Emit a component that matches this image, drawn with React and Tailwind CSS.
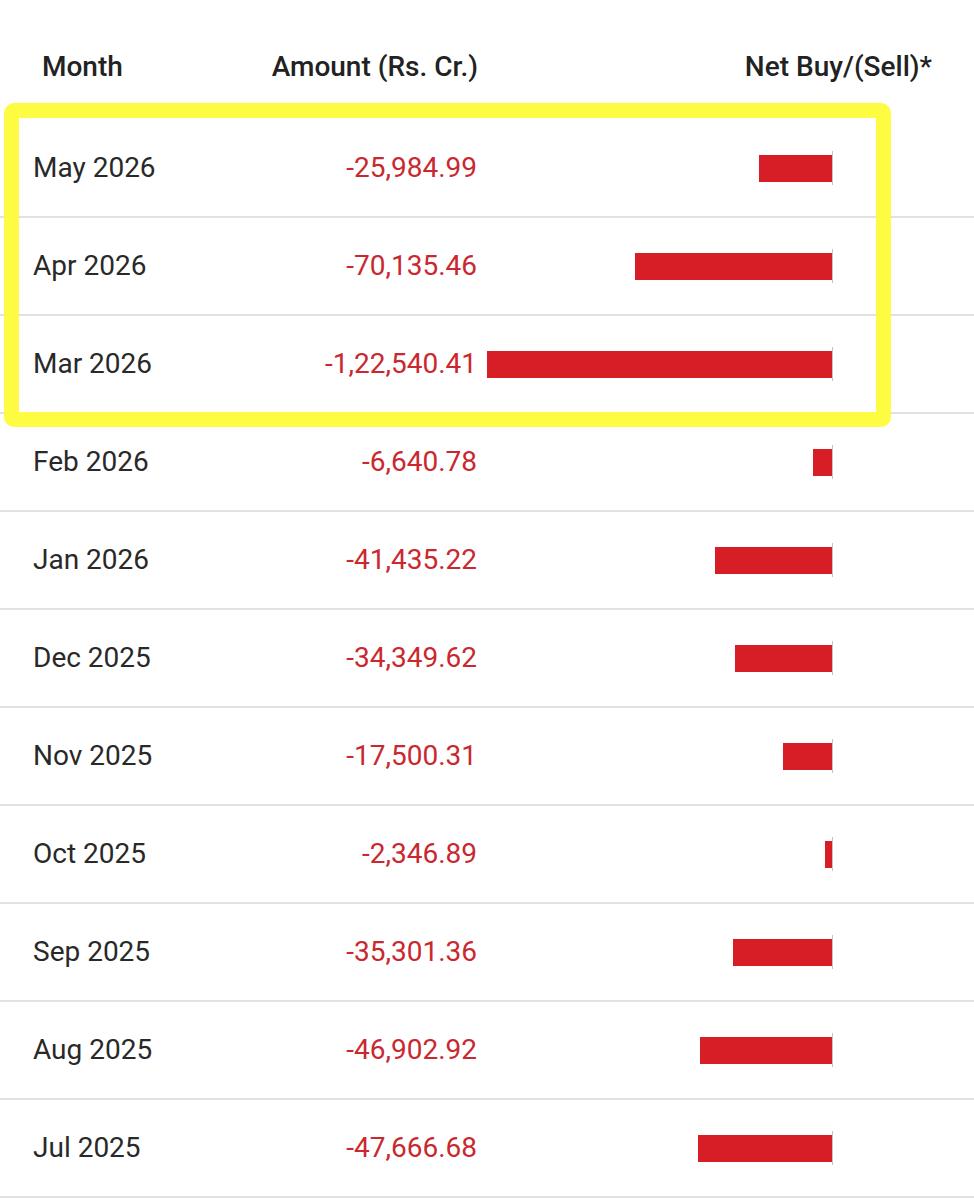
import React from 'react';

const rows = [
  { month: 'May 2026', amount: '-25,984.99', value: 25984.99 },
  { month: 'Apr 2026', amount: '-70,135.46', value: 70135.46 },
  { month: 'Mar 2026', amount: '-1,22,540.41', value: 122540.41 },
  { month: 'Feb 2026', amount: '-6,640.78', value: 6640.78 },
  { month: 'Jan 2026', amount: '-41,435.22', value: 41435.22 },
  { month: 'Dec 2025', amount: '-34,349.62', value: 34349.62 },
  { month: 'Nov 2025', amount: '-17,500.31', value: 17500.31 },
  { month: 'Oct 2025', amount: '-2,346.89', value: 2346.89 },
  { month: 'Sep 2025', amount: '-35,301.36', value: 35301.36 },
  { month: 'Aug 2025', amount: '-46,902.92', value: 46902.92 },
  { month: 'Jul 2025', amount: '-47,666.68', value: 47666.68 },
];

const maxValue = 122540.41;
const barMax = 345;

export default function App() {
  return (
    <div className="relative w-[974px] h-[1200px] bg-white overflow-hidden font-['Roboto',sans-serif] text-[28px] text-[#292929]">
      {/* Header */}
      <div className="flex items-center h-[120px] pt-[14px]">
        <div className="w-[250px] pl-[42px] font-medium text-[#222]">Month</div>
        <div className="w-[228px] text-right font-medium text-[#222] whitespace-nowrap">Amount (Rs. Cr.)</div>
        <div className="w-[454px] text-right font-medium text-[#222] whitespace-nowrap">Net Buy/(Sell)*</div>
      </div>

      {/* Rows */}
      {rows.map((r) => (
        <div key={r.month} className="flex items-center h-[98px] border-b-2 border-[#e2e2e2]">
          <div className="w-[250px] pl-[33px] whitespace-nowrap">{r.month}</div>
          <div className="w-[227px] text-right text-[#c9282f] whitespace-nowrap">{r.amount}</div>
          <div className="ml-[10px] w-[345px] flex justify-end items-center">
            <div className="h-[27px] bg-[#d71e26]" style={{ width: Math.round((r.value / maxValue) * barMax) }} />
          </div>
          <div className="w-px h-[34px] bg-[#c4c4c4]" />
        </div>
      ))}

      {/* Highlight box */}
      <div className="absolute left-[4px] top-[103px] w-[887px] h-[324px] border-[15px] border-[#fdfb42] rounded-[10px]" />
    </div>
  );
}
